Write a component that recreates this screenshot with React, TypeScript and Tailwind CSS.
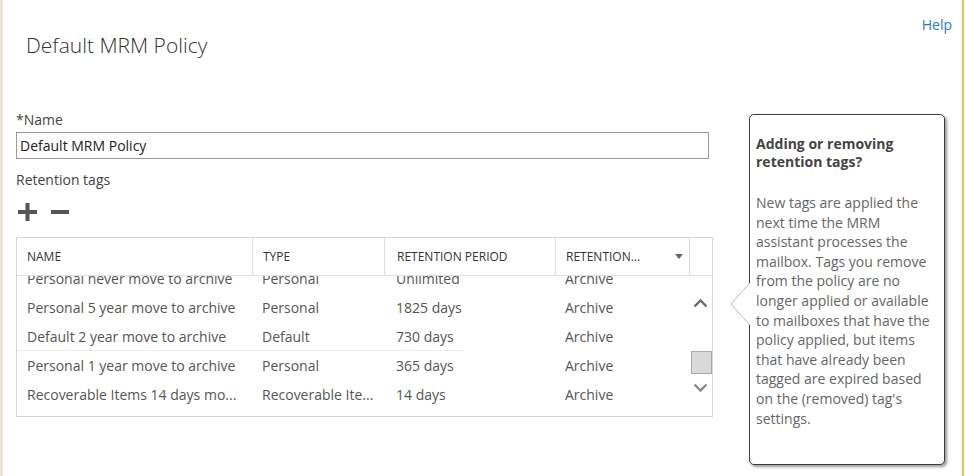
import React from "react";

// Retention policy editor: name field, retention tag list and a help callout.

const rows: [string, string, string, string][] = [
  ["Personal never move to archive", "Personal", "Unlimited", "Archive"],
  ["Personal 5 year move to archive", "Personal", "1825 days", "Archive"],
  ["Default 2 year move to archive", "Default", "730 days", "Archive"],
  ["Personal 1 year move to archive", "Personal", "365 days", "Archive"],
  ["Recoverable Items 14 days mo...", "Recoverable Ite...", "14 days", "Archive"],
];

const cols = "grid grid-cols-[235px_132px_171px_134px_23px]";

function Chevron({ up }: { up?: boolean }) {
  return (
    <svg width="15" height="10" viewBox="0 0 15 10" className="block">
      <path
        d={up ? "M1.5 8.5 L7.5 2.5 L13.5 8.5" : "M1.5 1.5 L7.5 7.5 L13.5 1.5"}
        fill="none"
        stroke={up ? "#6a6a6a" : "#8a8a8a"}
        strokeWidth="2.4"
      />
    </svg>
  );
}

function TagTable() {
  return (
    <div className="mt-[16px] h-[180px] border border-[#d6d6d6]">
      <div className={`${cols} h-[38px] border-b border-[#e2e2e2] text-[12px] text-[#333]`}>
        <div className="flex items-center pl-[10px]">NAME</div>
        <div className="flex items-center border-l border-[#dedede] pl-[10px]">TYPE</div>
        <div className="flex items-center border-l border-[#dedede] pl-[12px]">RETENTION PERIOD</div>
        <div className="flex items-center border-l border-[#dedede] pl-[10px]">
          <span>RETENTION...</span>
          <svg width="8" height="5" viewBox="0 0 8 5" className="ml-auto mr-[6px]">
            <path d="M0 0 H8 L4 5 Z" fill="#666" />
          </svg>
        </div>
        <div className="border-l border-[#dedede]" />
      </div>
      <div className="relative h-[140px] overflow-hidden text-[14px] text-[#555]">
        <div className="-mt-[12px]">
          {rows.map((r, i) => (
            <div key={i} className={`${cols} relative h-[29px] items-center whitespace-nowrap`}>
              <div className="pl-[10px]">{r[0]}</div>
              <div className="pl-[10px]">{r[1]}</div>
              <div className="pl-[12px]">{r[2]}</div>
              <div className="pl-[10px]">{r[3]}</div>
              <div />
              {i === 2 && <div className="absolute bottom-0 left-0 h-px w-[446px] bg-[#ececec]" />}
            </div>
          ))}
        </div>
        {/* scrollbar */}
        <div className="absolute right-0 top-0 flex h-full w-[23px] flex-col items-center">
          <div className="mt-[22px]">
            <Chevron up />
          </div>
          <div className="ml-[2px] mt-[43px] h-[23px] w-[21px] border border-[#a8a8a8] bg-[#d9d9d9]" />
          <div className="mt-[9px]">
            <Chevron />
          </div>
        </div>
      </div>
    </div>
  );
}

function Callout() {
  return (
    <div className="relative ml-[36px] mt-[4px] h-[351px] w-[196px] rounded-[5px] border border-[#3c3c3c] bg-white pl-[6px] pr-[4px] pt-[20px] shadow-[2px_2px_3px_rgba(0,0,0,0.4)]">
      <svg width="22" height="42" viewBox="0 0 22 42" className="absolute -left-[20px] top-[168px]">
        <rect x="19" y="1" width="3" height="40" fill="#fff" />
        <path d="M20 0 L0.8 21 L20 42" fill="#fff" stroke="#b8b8b8" strokeWidth="1" />
      </svg>
      <h2 className="text-[14px] font-bold leading-[18px] text-[#444]">
        Adding or removing retention tags?
      </h2>
      <p className="mt-[22px] text-[14px] leading-[19.6px] text-[#666]">
        New tags are applied the next time the MRM assistant processes the mailbox. Tags you remove from the
        policy are no longer applied or available to mailboxes that have the policy applied, but items that have
        already been tagged are expired based on the (removed) tag's settings.
      </p>
    </div>
  );
}

export default function App() {
  return (
    <div className="flex h-[476px] w-[966px] overflow-hidden bg-white font-['Open_Sans',sans-serif]">
      <div className="w-[3px] bg-[#ebe5d6]" />
      <div className="flex-1">
        <div className="flex justify-between">
          <h1 className="pl-[23px] pt-[31px] text-[21px] font-light leading-[28px] text-[#333]">
            Default MRM Policy
          </h1>
          <a className="pr-[10px] pt-[15px] text-[14px] leading-[20px] text-[#2b7bc4]">Help</a>
        </div>
        <div className="mt-[51px] flex items-start">
          <div className="ml-[13px] w-[697px]">
            <div className="text-[14px] leading-[20px] text-[#444]">*Name</div>
            <div className="mt-[2px] flex h-[27px] w-[693px] items-center border border-[#9a9a9a] px-[3px] text-[14px] text-[#222]">
              Default MRM Policy
            </div>
            <div className="mt-[11px] text-[14px] leading-[20px] text-[#444]">Retention tags</div>
            <div className="mt-[13px] flex h-[18px] items-center gap-[14px] pl-[2px]">
              <svg width="19" height="18" viewBox="0 0 19 18">
                <path d="M0 9 H19 M9.5 0 V18" stroke="#555" strokeWidth="4" />
              </svg>
              <svg width="18" height="18" viewBox="0 0 18 18">
                <path d="M0 9 H18" stroke="#555" strokeWidth="4" />
              </svg>
            </div>
            <TagTable />
          </div>
          <Callout />
        </div>
      </div>
      <div className="w-[2px] bg-[#dcc066]" />
      <div className="w-[2px]" />
    </div>
  );
}
